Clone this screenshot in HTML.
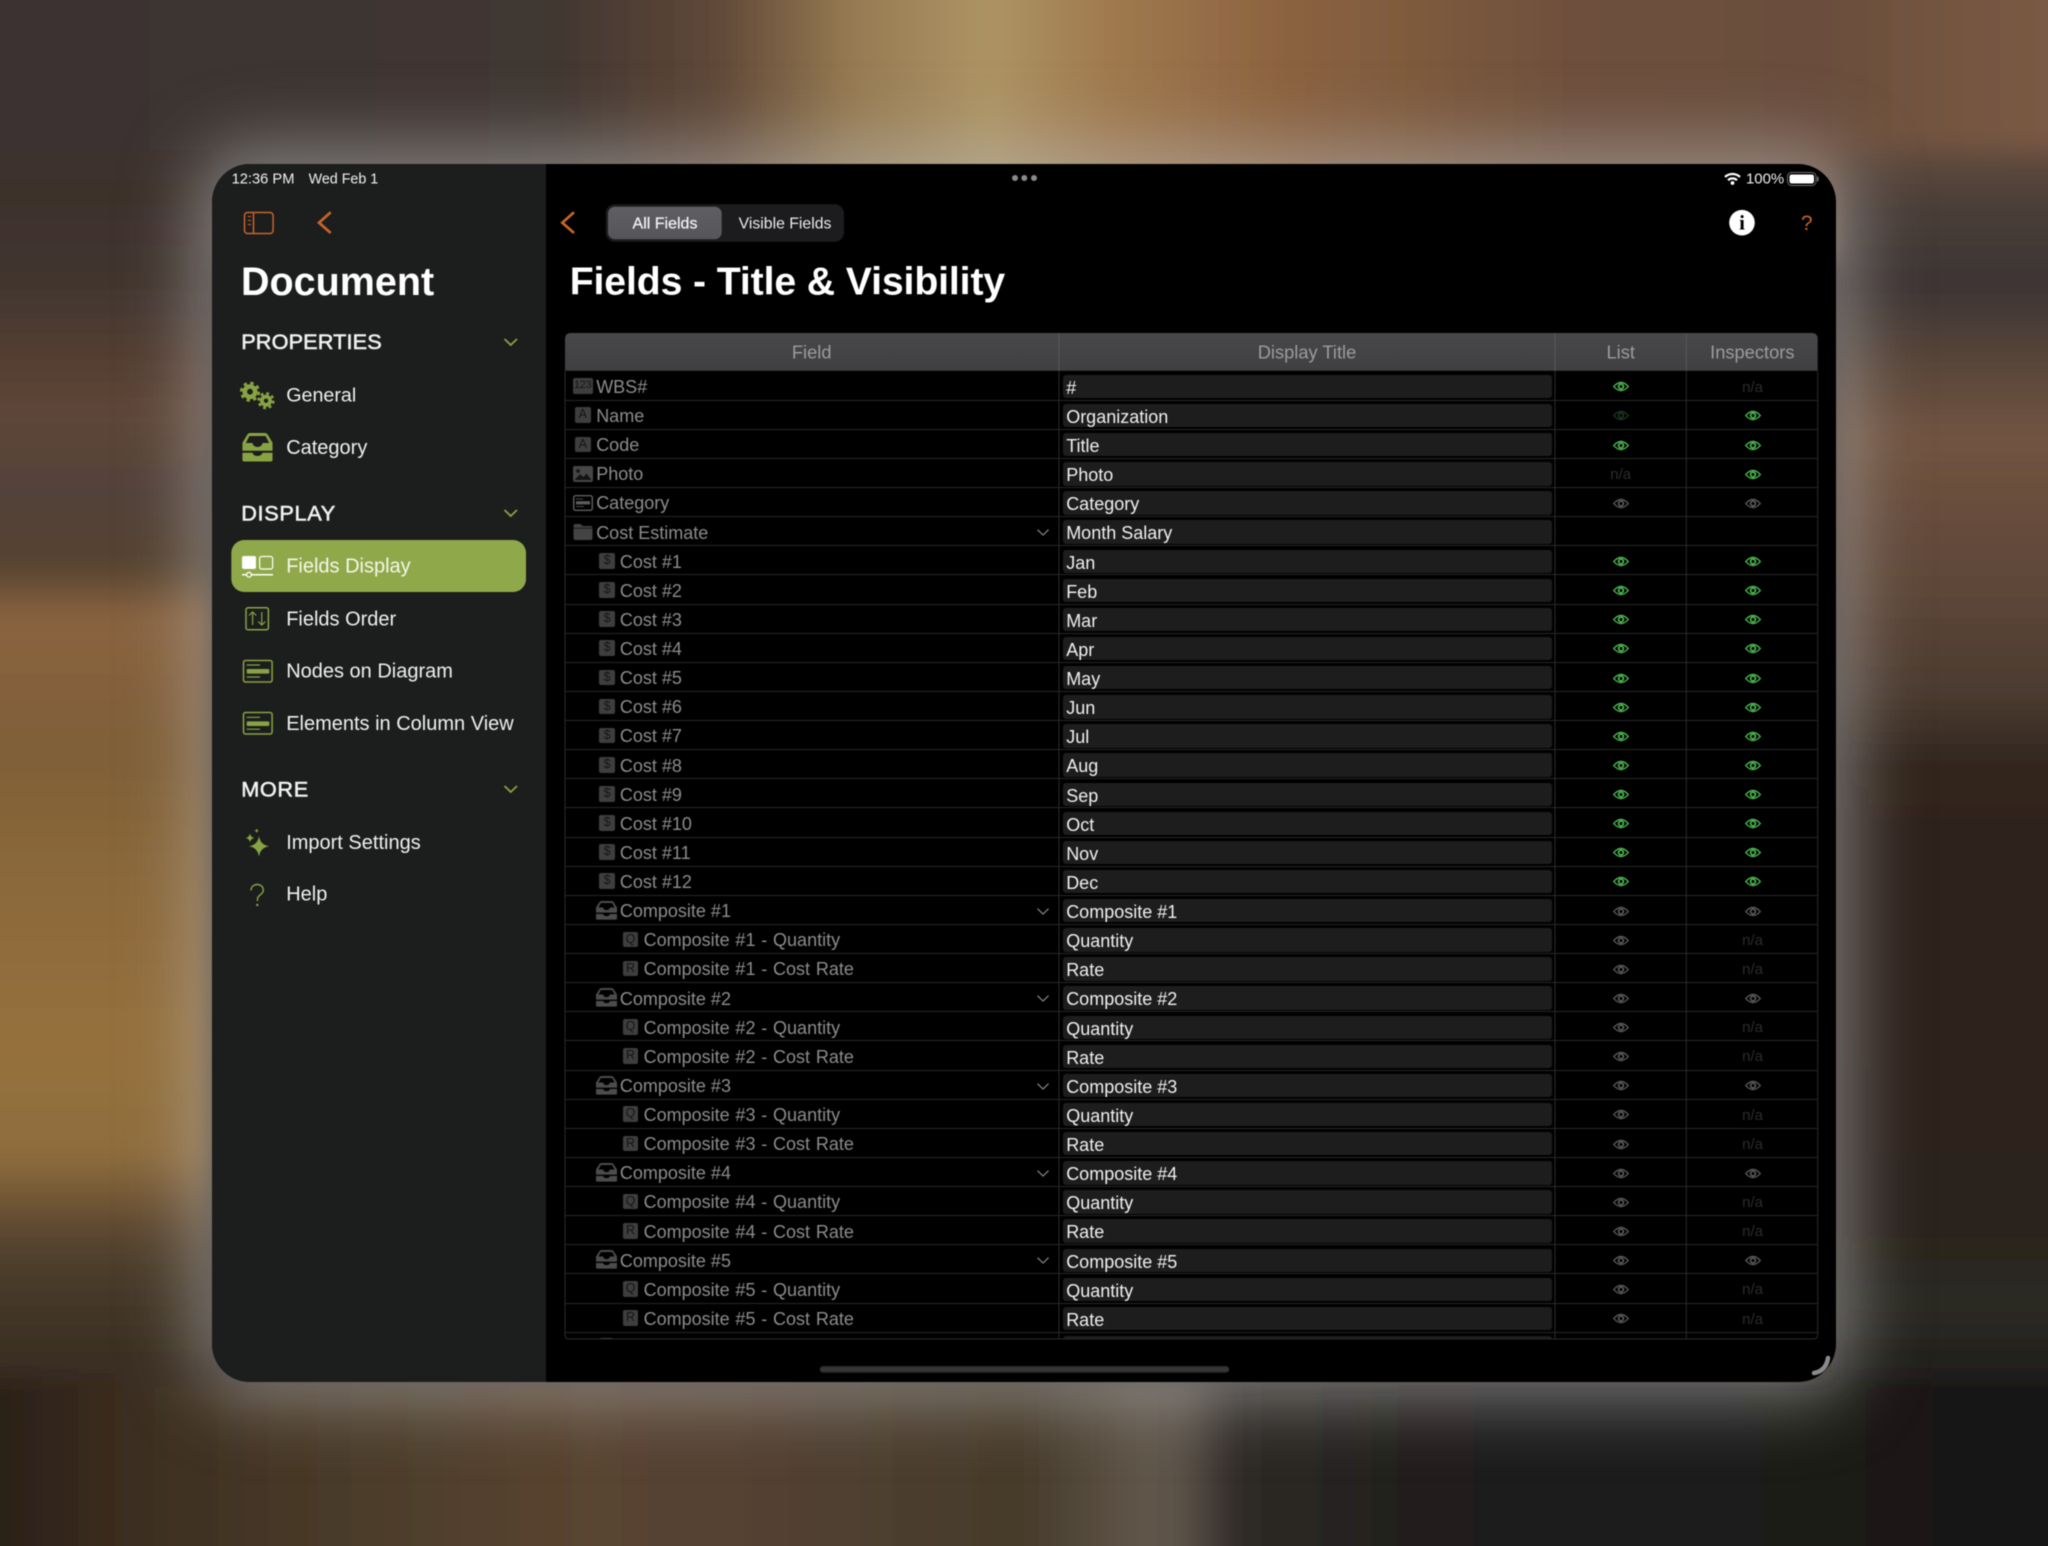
<!DOCTYPE html>
<html><head><meta charset="utf-8"><title>Fields - Title &amp; Visibility</title>
<style>
html,body{margin:0;padding:0;width:2048px;height:1546px;overflow:hidden;background:#2a2220;font-family:"Liberation Sans",sans-serif}
.bg{position:absolute;left:0;top:0;width:2048px;height:1546px}
.wrap{position:absolute;left:0;top:0;width:2048px;height:1546px;filter:blur(.4px)}
.dev{position:absolute;left:212px;top:164px;width:1624px;height:1218px;border-radius:38px;background:#000;box-shadow:0 0 70px 18px rgba(185,185,185,.55);overflow:hidden}
.side{position:absolute;left:0;top:0;width:334px;height:1218px;background:#1c1d1d}
.ov{position:absolute;left:0;top:0;width:2048px;height:1546px}
.ov text{font-family:"Liberation Sans",sans-serif}
.rows{position:absolute;left:565px;top:371.57px;width:1252.7px;height:967.4px;overflow:hidden;font-size:18px}
.r{position:relative;height:29.13px;border-bottom:1px solid #262626;box-sizing:border-box}
.f{position:absolute;top:1.4px;line-height:29px;color:#8c8c8c;white-space:nowrap}
.a{left:31.2px}.c{left:54.9px}.d{left:78.6px;word-spacing:.8px}
.t{position:absolute;left:497.7px;top:3.3px;width:486.1px;height:23.3px;padding-left:3.5px;background:#1d1d1d;border-radius:3px;color:#f0f0f0;line-height:26px;white-space:nowrap}
.b{position:absolute;top:6.7px;width:15.7px;height:15.7px;background:#3e3e3e;border-radius:2px;color:#151515;font-size:12.5px;line-height:15.7px;text-align:center}
.b0{left:10px}.b1{left:34.3px}.b2{left:57.7px}
.w{left:7.7px;width:20px;font-size:11px;letter-spacing:-.3px}
.i{position:absolute;left:7.7px;top:6.7px;width:20px;height:16px;overflow:visible}
.ci{position:absolute;left:31px;top:5px;width:21px;height:19px;color:#4c4c4c}
.e{position:absolute;top:9.7px;width:16px;height:11px;overflow:visible}
.L{left:1047.7px}.I{left:1179.6px}
.g{color:#50c455}.x{color:#5e5e5e}.m{color:#1e3a20}
.n{position:absolute;top:1px;width:40px;margin-left:-12px;text-align:center;line-height:29px;color:#2c2c2c;font-size:15px;white-space:nowrap}
.v{position:absolute;left:472.3px;top:12px;width:12px;height:7px;overflow:visible}
</style></head><body>
<svg class="bg" viewBox="0 0 2048 1546" xmlns="http://www.w3.org/2000/svg">
<defs>
<linearGradient id="gt" gradientUnits="userSpaceOnUse" x1="0" y1="0" x2="2048" y2="0">
<stop offset="0" stop-color="#3d3230"/><stop offset=".146" stop-color="#3d3530"/><stop offset=".273" stop-color="#423732"/><stop offset=".35" stop-color="#604838"/><stop offset=".415" stop-color="#957a52"/><stop offset=".483" stop-color="#ad9464"/><stop offset=".54" stop-color="#a07a4f"/><stop offset=".625" stop-color="#8c6340"/><stop offset=".765" stop-color="#6e503c"/><stop offset=".89" stop-color="#6a4e3c"/><stop offset="1" stop-color="#7a5a44"/>
</linearGradient>
<linearGradient id="gl" gradientUnits="userSpaceOnUse" x1="0" y1="0" x2="0" y2="1546">
<stop offset="0" stop-color="#3f3330"/><stop offset=".127" stop-color="#3d302c"/><stop offset=".185" stop-color="#42362f"/><stop offset=".243" stop-color="#584034"/><stop offset=".268" stop-color="#5e4638"/><stop offset=".319" stop-color="#52423a"/><stop offset=".365" stop-color="#54432f"/><stop offset=".4" stop-color="#8a6340"/><stop offset=".485" stop-color="#7f5f38"/><stop offset=".574" stop-color="#8c693a"/><stop offset=".676" stop-color="#95703e"/><stop offset=".746" stop-color="#8f6d3e"/><stop offset=".798" stop-color="#5a4630"/><stop offset=".829" stop-color="#473a2a"/><stop offset=".893" stop-color="#372b20"/><stop offset="1" stop-color="#291f1b"/>
</linearGradient>
<linearGradient id="gr" gradientUnits="userSpaceOnUse" x1="0" y1="0" x2="0" y2="1546">
<stop offset="0" stop-color="#7a5c45"/><stop offset=".083" stop-color="#6a4f3e"/><stop offset=".134" stop-color="#4a3e38"/><stop offset=".185" stop-color="#3d3433"/><stop offset=".236" stop-color="#58463a"/><stop offset=".281" stop-color="#715440"/><stop offset=".383" stop-color="#5d4638"/><stop offset=".446" stop-color="#4c3c31"/><stop offset=".497" stop-color="#30251e"/><stop offset=".638" stop-color="#2d211c"/><stop offset=".798" stop-color="#2c241d"/><stop offset=".842" stop-color="#2c2a23"/><stop offset=".893" stop-color="#1f1e1b"/><stop offset="1" stop-color="#181818"/>
</linearGradient>
<linearGradient id="gb" gradientUnits="userSpaceOnUse" x1="0" y1="0" x2="2048" y2="0">
<stop offset="0" stop-color="#2b2018"/><stop offset=".063" stop-color="#3c2e20"/><stop offset=".191" stop-color="#4d3e2c"/><stop offset=".287" stop-color="#5a4430"/><stop offset=".415" stop-color="#4f4030"/><stop offset=".498" stop-color="#463a2b"/><stop offset=".555" stop-color="#5f5548"/><stop offset=".577" stop-color="#5c5248"/><stop offset=".605" stop-color="#2e2a26"/><stop offset=".701" stop-color="#201d1b"/><stop offset="1" stop-color="#181818"/>
</linearGradient>
<filter id="bl" x="-5%" y="-5%" width="110%" height="110%"><feGaussianBlur stdDeviation="12"/></filter>
</defs>
<g filter="url(#bl)">
<rect x="200" y="-40" width="1650" height="300" fill="url(#gt)"/>
<rect x="-40" y="100" width="252" height="1486" fill="url(#gl)"/>
<rect x="1836" y="100" width="252" height="1486" fill="url(#gr)"/>
<rect x="-40" y="-40" width="2128" height="190" fill="url(#gt)"/>
<rect x="-40" y="1380" width="2128" height="206" fill="url(#gb)"/>
</g>
</svg>
<div class="wrap">
<div class="dev"><div class="side"></div></div>
<svg width="0" height="0" style="position:absolute"><defs>
<g id="e"><path d="M.7 5.5Q8-2.6 15.3 5.5 8 13.6.7 5.5Z" fill="none" stroke="currentColor" stroke-width="1.3"/><circle cx="8" cy="5.5" r="2.4" fill="none" stroke="currentColor" stroke-width="1.6"/></g>
<g id="ch"><path d="M.5.7L6 6 11.5.7" fill="none" stroke="#888" stroke-width="1.2"/></g>
<symbol id="ib" viewBox="0 0 30 29" preserveAspectRatio="none"><path fill="currentColor" fill-rule="evenodd" d="M0 10L5 1.5Q6 0 8 0H22Q24 0 25 1.5L30 10V17.8H0ZM3.5 10H10Q11 14 15 14 19 14 20 10H26.5L23 3H7Z"/><path fill="currentColor" d="M0 19.8H10Q11 23 15 23 19 23 20 19.8H30V26.5Q30 28.5 28 28.5H2Q0 28.5 0 26.5Z"/></symbol>
</defs></svg>
<div class="rows">
<div class="r"><span class="b w">123</span><span class="f a">WBS#</span><span class="t">#</span><svg class="e L g"><use href="#e"/></svg><span class="n I">n/a</span></div>
<div class="r"><span class="b b0">A</span><span class="f a">Name</span><span class="t">Organization</span><svg class="e L m"><use href="#e"/></svg><svg class="e I g"><use href="#e"/></svg></div>
<div class="r"><span class="b b0">A</span><span class="f a">Code</span><span class="t">Title</span><svg class="e L g"><use href="#e"/></svg><svg class="e I g"><use href="#e"/></svg></div>
<div class="r"><svg class="i" viewBox="0 0 20 16"><rect width="20" height="16" rx="2" fill="#464646"/><path d="M1.5 14L7 8 10.5 11 13.5 7.5 18.5 14Z" fill="#141414"/><circle cx="5" cy="5" r="2" fill="#1a1a1a"/></svg><span class="f a">Photo</span><span class="t">Photo</span><span class="n L">n/a</span><svg class="e I g"><use href="#e"/></svg></div>
<div class="r"><svg class="i" viewBox="0 0 20 16"><rect x=".7" y=".7" width="18.6" height="14.6" rx="2" fill="none" stroke="#5e5e5e" stroke-width="1.4"/><path d="M3 4H10M3 11.5H11" stroke="#4c4c4c" stroke-width="1.1"/><rect x="3" y="6.2" width="14" height="3.2" fill="#5e5e5e"/></svg><span class="f a">Category</span><span class="t">Category</span><svg class="e L x"><use href="#e"/></svg><svg class="e I x"><use href="#e"/></svg></div>
<div class="r"><svg class="i" viewBox="0 0 20 16"><path d="M.5 2Q.5 0 2.5 0H7.5L9.5 2H17.5Q19.5 2 19.5 4V14Q19.5 16 17.5 16H2.5Q.5 16 .5 14Z" fill="#444"/><path d="M.5 4.2H19.5" stroke="#111" stroke-width=".8"/></svg><span class="f a">Cost Estimate</span><svg class="v"><use href="#ch"/></svg><span class="t">Month Salary</span></div>
<div class="r"><span class="b b1">$</span><span class="f c">Cost #1</span><span class="t">Jan</span><svg class="e L g"><use href="#e"/></svg><svg class="e I g"><use href="#e"/></svg></div>
<div class="r"><span class="b b1">$</span><span class="f c">Cost #2</span><span class="t">Feb</span><svg class="e L g"><use href="#e"/></svg><svg class="e I g"><use href="#e"/></svg></div>
<div class="r"><span class="b b1">$</span><span class="f c">Cost #3</span><span class="t">Mar</span><svg class="e L g"><use href="#e"/></svg><svg class="e I g"><use href="#e"/></svg></div>
<div class="r"><span class="b b1">$</span><span class="f c">Cost #4</span><span class="t">Apr</span><svg class="e L g"><use href="#e"/></svg><svg class="e I g"><use href="#e"/></svg></div>
<div class="r"><span class="b b1">$</span><span class="f c">Cost #5</span><span class="t">May</span><svg class="e L g"><use href="#e"/></svg><svg class="e I g"><use href="#e"/></svg></div>
<div class="r"><span class="b b1">$</span><span class="f c">Cost #6</span><span class="t">Jun</span><svg class="e L g"><use href="#e"/></svg><svg class="e I g"><use href="#e"/></svg></div>
<div class="r"><span class="b b1">$</span><span class="f c">Cost #7</span><span class="t">Jul</span><svg class="e L g"><use href="#e"/></svg><svg class="e I g"><use href="#e"/></svg></div>
<div class="r"><span class="b b1">$</span><span class="f c">Cost #8</span><span class="t">Aug</span><svg class="e L g"><use href="#e"/></svg><svg class="e I g"><use href="#e"/></svg></div>
<div class="r"><span class="b b1">$</span><span class="f c">Cost #9</span><span class="t">Sep</span><svg class="e L g"><use href="#e"/></svg><svg class="e I g"><use href="#e"/></svg></div>
<div class="r"><span class="b b1">$</span><span class="f c">Cost #10</span><span class="t">Oct</span><svg class="e L g"><use href="#e"/></svg><svg class="e I g"><use href="#e"/></svg></div>
<div class="r"><span class="b b1">$</span><span class="f c">Cost #11</span><span class="t">Nov</span><svg class="e L g"><use href="#e"/></svg><svg class="e I g"><use href="#e"/></svg></div>
<div class="r"><span class="b b1">$</span><span class="f c">Cost #12</span><span class="t">Dec</span><svg class="e L g"><use href="#e"/></svg><svg class="e I g"><use href="#e"/></svg></div>
<div class="r"><svg class="ci"><use href="#ib"/></svg><span class="f c">Composite #1</span><svg class="v"><use href="#ch"/></svg><span class="t">Composite #1</span><svg class="e L x"><use href="#e"/></svg><svg class="e I x"><use href="#e"/></svg></div>
<div class="r"><span class="b b2">Q</span><span class="f d">Composite #1 - Quantity</span><span class="t">Quantity</span><svg class="e L x"><use href="#e"/></svg><span class="n I">n/a</span></div>
<div class="r"><span class="b b2">R</span><span class="f d">Composite #1 - Cost Rate</span><span class="t">Rate</span><svg class="e L x"><use href="#e"/></svg><span class="n I">n/a</span></div>
<div class="r"><svg class="ci"><use href="#ib"/></svg><span class="f c">Composite #2</span><svg class="v"><use href="#ch"/></svg><span class="t">Composite #2</span><svg class="e L x"><use href="#e"/></svg><svg class="e I x"><use href="#e"/></svg></div>
<div class="r"><span class="b b2">Q</span><span class="f d">Composite #2 - Quantity</span><span class="t">Quantity</span><svg class="e L x"><use href="#e"/></svg><span class="n I">n/a</span></div>
<div class="r"><span class="b b2">R</span><span class="f d">Composite #2 - Cost Rate</span><span class="t">Rate</span><svg class="e L x"><use href="#e"/></svg><span class="n I">n/a</span></div>
<div class="r"><svg class="ci"><use href="#ib"/></svg><span class="f c">Composite #3</span><svg class="v"><use href="#ch"/></svg><span class="t">Composite #3</span><svg class="e L x"><use href="#e"/></svg><svg class="e I x"><use href="#e"/></svg></div>
<div class="r"><span class="b b2">Q</span><span class="f d">Composite #3 - Quantity</span><span class="t">Quantity</span><svg class="e L x"><use href="#e"/></svg><span class="n I">n/a</span></div>
<div class="r"><span class="b b2">R</span><span class="f d">Composite #3 - Cost Rate</span><span class="t">Rate</span><svg class="e L x"><use href="#e"/></svg><span class="n I">n/a</span></div>
<div class="r"><svg class="ci"><use href="#ib"/></svg><span class="f c">Composite #4</span><svg class="v"><use href="#ch"/></svg><span class="t">Composite #4</span><svg class="e L x"><use href="#e"/></svg><svg class="e I x"><use href="#e"/></svg></div>
<div class="r"><span class="b b2">Q</span><span class="f d">Composite #4 - Quantity</span><span class="t">Quantity</span><svg class="e L x"><use href="#e"/></svg><span class="n I">n/a</span></div>
<div class="r"><span class="b b2">R</span><span class="f d">Composite #4 - Cost Rate</span><span class="t">Rate</span><svg class="e L x"><use href="#e"/></svg><span class="n I">n/a</span></div>
<div class="r"><svg class="ci"><use href="#ib"/></svg><span class="f c">Composite #5</span><svg class="v"><use href="#ch"/></svg><span class="t">Composite #5</span><svg class="e L x"><use href="#e"/></svg><svg class="e I x"><use href="#e"/></svg></div>
<div class="r"><span class="b b2">Q</span><span class="f d">Composite #5 - Quantity</span><span class="t">Quantity</span><svg class="e L x"><use href="#e"/></svg><span class="n I">n/a</span></div>
<div class="r"><span class="b b2">R</span><span class="f d">Composite #5 - Cost Rate</span><span class="t">Rate</span><svg class="e L x"><use href="#e"/></svg><span class="n I">n/a</span></div>
<div class="r"><svg class="ci"><use href="#ib"/></svg><span class="t"></span></div>
</div>
<svg class="ov" viewBox="0 0 2048 1546" xmlns="http://www.w3.org/2000/svg">
<defs>
<linearGradient id="hg" x1="0" y1="0" x2="0" y2="1"><stop offset="0" stop-color="#48484a"/><stop offset="1" stop-color="#404042"/></linearGradient>
<linearGradient id="sg" x1="0" y1="0" x2="0" y2="1"><stop offset="0" stop-color="#5f5f63"/><stop offset="1" stop-color="#55555a"/></linearGradient>
<linearGradient id="hm" x1="0" y1="0" x2="0" y2="1"><stop offset="0" stop-color="#2a2a2a"/><stop offset=".5" stop-color="#383838"/><stop offset="1" stop-color="#2a2a2a"/></linearGradient>
</defs>
<!-- status bar -->
<text x="231.6" y="183.3" font-size="14.7" fill="#f0f0f0">12:36 PM</text>
<text x="308.6" y="183.3" font-size="14.3" fill="#f0f0f0">Wed Feb 1</text>
<circle cx="1015" cy="178" r="3" fill="#8a8a8a"/><circle cx="1024.3" cy="178" r="3" fill="#8a8a8a"/><circle cx="1034" cy="178" r="3" fill="#8a8a8a"/>
<path d="M1725 177A10.8 10.8 0 0 1 1740 177M1728 180.2A6.4 6.4 0 0 1 1737 180.2" fill="none" stroke="#fff" stroke-width="2.2"/><circle cx="1732.5" cy="183" r="1.9" fill="#fff"/>
<text x="1746" y="183.3" font-size="14.9" fill="#f0f0f0">100%</text>
<rect x="1787.5" y="172.5" width="28.5" height="13" rx="4" fill="none" stroke="#707070" stroke-width="1"/><rect x="1789.5" y="174.5" width="24.5" height="9" rx="2.2" fill="#fff"/><rect x="1817" y="176.5" width="1.6" height="5" rx=".8" fill="#707070"/>
<!-- sidebar top -->
<rect x="244.5" y="212.5" width="28.6" height="21" rx="3" fill="none" stroke="#c8642a" stroke-width="1.5"/><path d="M253.5 212.5V233.5" stroke="#c8642a" stroke-width="1.5"/><path d="M247.8 216.5H251M247.8 220.5H251M247.8 224.5H251" stroke="#c8642a" stroke-width="1"/>
<path d="M330.7 212.3L319 222.7 330.7 233" fill="none" stroke="#c8642a" stroke-width="2.7"/>
<text x="241" y="295" font-size="39.5" font-weight="700" fill="#fff">Document</text>
<!-- section headers -->
<g font-size="21.7" fill="#f2f2f2" stroke="#f2f2f2" stroke-width=".55">
<text x="241.2" y="349" textLength="140.5">PROPERTIES</text><text x="241.2" y="520.7" textLength="94">DISPLAY</text><text x="241.2" y="796.7" textLength="67">MORE</text></g>
<path d="M504.5 339L510.7 345 517 339M504.5 510L510.7 516 517 510M504.5 786L510.7 792 517 786" fill="none" stroke="#88a343" stroke-width="1.8"/>
<rect x="231.3" y="540" width="294.7" height="52" rx="13" fill="#8fa94a"/>
<!-- sidebar icons -->
<g fill="none" stroke="#88a343">
<circle cx="250" cy="391.7" r="5.2" stroke-width="4.6"/><circle cx="250" cy="391.7" r="8.7" stroke-width="2.8" stroke-dasharray="3.4 3.43"/>
<circle cx="266" cy="400.7" r="4.1" stroke-width="3.8"/><circle cx="266" cy="400.7" r="7.2" stroke-width="2.8" stroke-dasharray="2.8 2.85"/>
</g>
<svg x="242.3" y="433" width="30.4" height="29" style="color:#88a343"><use href="#ib"/></svg>
<!-- fields display -->
<rect x="242" y="556" width="14" height="13" rx="2" fill="#fff"/><rect x="259.6" y="556.5" width="13" height="12.5" rx="2" fill="none" stroke="#fff" stroke-width="1.2"/><path d="M242 574.7H273" stroke="#fff" stroke-width="1.5"/><circle cx="249" cy="574.7" r="2.4" fill="#8fa94a" stroke="#fff" stroke-width="1.3"/>
<g fill="none" stroke="#88a343">
<rect x="246" y="607.7" width="22.4" height="22" rx="2" stroke-width="1.5"/>
<path d="M252.6 625V612M249 615.5L252.6 612 256.2 615.5M261.8 612V625M258.2 621.5L261.8 625 265.4 621.5" stroke-width="1.2"/>
<rect x="243.5" y="660.5" width="28.6" height="21.5" rx="2" stroke-width="1.5"/>
<path d="M246.7 665H260M246.7 677H260" stroke-width="1.2"/>
<rect x="243.5" y="712.5" width="28.6" height="21.5" rx="2" stroke-width="1.5"/>
<path d="M246.7 717.3H260M246.7 729.2H260" stroke-width="1.2"/>
</g>
<rect x="246.7" y="669" width="22.6" height="4.6" rx="1" fill="#88a343"/>
<rect x="246.7" y="721.4" width="22.6" height="4.6" rx="1" fill="#88a343"/>
<path fill="#88a343" d="M259 836Q260.3 845 269.2 846.3 260.3 847.6 259 856.7 257.7 847.6 248.8 846.3 257.7 845 259 836ZM250 833.5Q250.6 837.4 254.5 838 250.6 838.6 250 842.5 249.4 838.6 245.5 838 249.4 837.4 250 833.5ZM256.7 828.2Q257 830.4 259.2 830.7 257 831 256.7 833.2 256.4 831 254.2 830.7 256.4 830.4 256.7 828.2Z"/>
<path d="M251 890.5C251 886.5 254 884.5 257 884.5 261 884.5 263.3 887 263.3 890 263.3 894.5 258 895 257.5 898.5V901" fill="none" stroke="#88a343" stroke-width="1.4"/><circle cx="257.3" cy="905" r="1.2" fill="#88a343"/>
<!-- sidebar labels -->
<g font-size="20" fill="#f0f0f0">
<text x="286.2" y="401.7" font-size="19.7">General</text><text x="286.2" y="454">Category</text>
<text x="286.2" y="572.7" fill="#f5f7ea">Fields Display</text><text x="286.2" y="625.7">Fields Order</text>
<text x="286.2" y="677.7">Nodes on Diagram</text><text x="286.2" y="730">Elements in Column View</text>
<text x="286.2" y="849">Import Settings</text><text x="286.2" y="900.7">Help</text>
</g>
<!-- header bar -->
<path d="M574 212.3L562.3 222.7 574 233" fill="none" stroke="#c8642a" stroke-width="2.7"/>
<rect x="605.7" y="204.3" width="238.3" height="37.4" rx="9" fill="#1c1c1e"/>
<rect x="608" y="206.7" width="113.7" height="32.6" rx="7" fill="url(#sg)"/>
<text x="665" y="228.3" font-size="16" text-anchor="middle" fill="#f2f2f2" stroke="#f2f2f2" stroke-width=".25">All Fields</text>
<text x="785" y="228.3" font-size="15.8" text-anchor="middle" fill="#ececec">Visible Fields</text>
<circle cx="1742" cy="222.7" r="12.8" fill="#fff"/>
<text x="1742" y="229.6" font-size="21" font-weight="700" text-anchor="middle" fill="#000" style="font-family:'Liberation Serif',serif">i</text>
<text x="1806.7" y="230" font-size="21" text-anchor="middle" fill="#c8642a">?</text>
<text x="569.7" y="294.3" font-size="39.2" font-weight="700" textLength="435.5" fill="#fff">Fields - Title &amp; Visibility</text>
<!-- table header -->
<path d="M565 339Q565 333 571 333H1811.7Q1817.7 333 1817.7 339V370.7H565Z" fill="url(#hg)"/>
<path d="M1058.9 333V370.7M1555 333V370.7M1686.3 333V370.7" stroke="#58585a" stroke-width="1"/>
<g font-size="18.3" text-anchor="middle" fill="#9c9c9e">
<text x="811.7" y="358.3">Field</text><text x="1307" y="358.3">Display Title</text><text x="1620.7" y="358.3">List</text><text x="1752.3" y="358.3">Inspectors</text>
</g>
<!-- table lines -->
<path d="M1058.9 371V1339M1555 371V1339M1686.3 371V1339" stroke="#2b2b2b" stroke-width="1"/>
<path d="M565 371V1335Q565 1339 569 1339H1813.7Q1817.7 1339 1817.7 1335V371" fill="none" stroke="#2b2b2b" stroke-width="1"/>
<!-- bottom -->
<rect x="820" y="1366" width="409" height="6.7" rx="3" fill="url(#hm)"/>
<path d="M1828 1358Q1826 1371 1814 1373" fill="none" stroke="#8a8a8a" stroke-width="4.5" stroke-linecap="round"/>
</svg>
</div>
</body></html>
